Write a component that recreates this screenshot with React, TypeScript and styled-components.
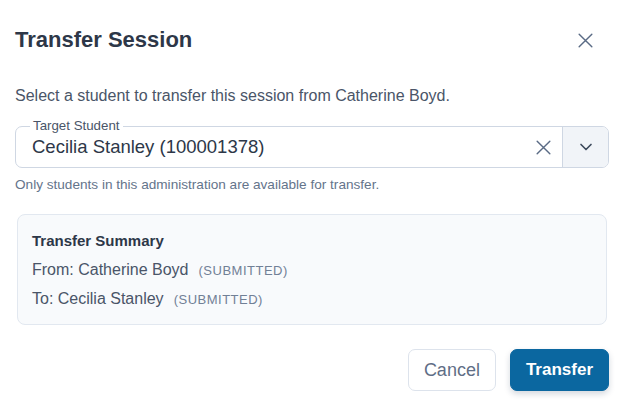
import React from "react";
import styled, { createGlobalStyle } from "styled-components";

const Global = createGlobalStyle`
  html, body { margin: 0; padding: 0; background: #ffffff; }
  body { font-family: "Liberation Sans", Arial, sans-serif; }
  * { box-sizing: border-box; }
`;

const Dialog = styled.div`
  width: 622px;
  height: 406px;
  padding: 0 13px 0 15px;
  display: flex;
  flex-direction: column;
`;

const Header = styled.div`
  height: 80px;
  display: flex;
  align-items: center;
  justify-content: space-between;
`;

const Title = styled.h2`
  margin: 0;
  font-size: 22px;
  line-height: 26px;
  font-weight: 700;
  color: #2d3748;
`;

const CloseButton = styled.button`
  width: 30px;
  height: 30px;
  margin-right: 9px;
  border: none;
  background: transparent;
  padding: 0;
  display: flex;
  align-items: center;
  justify-content: center;
  color: #5a6b85;
  cursor: pointer;
`;

const Description = styled.p`
  margin: 5px 0 0 0;
  height: 22px;
  font-size: 16px;
  line-height: 22px;
  color: #4a5568;
`;

const Field = styled.div`
  margin-top: 19px;
  height: 42px;
  border: 1px solid #cfd7e3;
  border-radius: 7px;
  display: flex;
  align-items: stretch;
  position: relative;
`;

const FloatingLabel = styled.span`
  position: absolute;
  left: 14px;
  top: -9px;
  padding: 0 3px;
  background: #ffffff;
  font-size: 13.3px;
  line-height: 16px;
  color: #4a5568;
`;

const Value = styled.div`
  flex: 1;
  display: flex;
  align-items: center;
  padding-left: 16px;
  font-size: 18.5px;
  color: #2d3748;
`;

const ClearButton = styled.button`
  width: 34px;
  margin-right: 2px;
  border: none;
  background: transparent;
  padding: 0;
  display: flex;
  align-items: center;
  justify-content: center;
  color: #5a6b85;
`;

const Toggle = styled.button`
  width: 46px;
  border: none;
  border-left: 1px solid #cfd7e3;
  background: #f1f4f8;
  border-radius: 0 6px 6px 0;
  padding: 0;
  display: flex;
  align-items: center;
  justify-content: center;
  color: #3d4a5c;
`;

const Helper = styled.div`
  margin-top: 9px;
  font-size: 13.6px;
  line-height: 16px;
  color: #64748b;
`;

const Summary = styled.div`
  margin: 21px 2px 0 2px;
  height: 111px;
  border: 1px solid #e2e8f0;
  border-radius: 8px;
  background: #f8fafc;
  padding: 16px 14px 0 14px;
  display: flex;
  flex-direction: column;
`;

const SummaryTitle = styled.div`
  font-size: 15px;
  font-weight: 700;
  line-height: 20px;
  color: #2d3748;
  margin-bottom: 9px;
`;

const SummaryRow = styled.div`
  font-size: 16px;
  line-height: 20px;
  color: #4a5568;
  margin-bottom: 8px;
  display: flex;
  align-items: baseline;
  gap: 10px;
`;

const Status = styled.span`
  font-size: 13px;
  letter-spacing: 0.5px;
  color: #718096;
`;

const Footer = styled.div`
  margin-top: 24px;
  display: flex;
  justify-content: flex-end;
  gap: 14px;
`;

const Button = styled.button<{ $primary?: boolean }>`
  height: 42px;
  padding: 0 ${(p) => (p.$primary ? "15px" : "15px")};
  border-radius: 7px;
  font-family: "Liberation Sans", Arial, sans-serif;
  font-size: ${(p) => (p.$primary ? "17px" : "18px")};
  font-weight: ${(p) => (p.$primary ? 700 : 400)};
  border: 1px solid ${(p) => (p.$primary ? "#0b67a0" : "#dde3ec")};
  background: ${(p) => (p.$primary ? "#0b67a0" : "#ffffff")};
  color: ${(p) => (p.$primary ? "#ffffff" : "#5f6e86")};
  box-shadow: ${(p) => (p.$primary ? "0 3px 6px rgba(15, 40, 70, 0.18)" : "none")};
  cursor: pointer;
`;

const XIcon = ({ size }: { size: number }) => (
  <svg width={size} height={size} viewBox="0 0 24 24" fill="none" stroke="currentColor" strokeWidth={1.8} strokeLinecap="round">
    <path d="M4 4 L20 20 M20 4 L4 20" />
  </svg>
);

const Chevron = () => (
  <svg width="20" height="20" viewBox="0 0 24 24" fill="none" stroke="currentColor" strokeWidth={2} strokeLinecap="round" strokeLinejoin="round">
    <path d="M6 9 L12 15 L18 9" />
  </svg>
);

export default function App() {
  return (
    <>
      <Global />
      <Dialog>
        <Header>
          <Title>Transfer Session</Title>
          <CloseButton aria-label="Close">
            <XIcon size={19} />
          </CloseButton>
        </Header>
        <Description>Select a student to transfer this session from Catherine Boyd.</Description>
        <Field>
          <FloatingLabel>Target Student</FloatingLabel>
          <Value>Cecilia Stanley (100001378)</Value>
          <ClearButton aria-label="Clear">
            <XIcon size={19} />
          </ClearButton>
          <Toggle aria-label="Open">
            <Chevron />
          </Toggle>
        </Field>
        <Helper>Only students in this administration are available for transfer.</Helper>
        <Summary>
          <SummaryTitle>Transfer Summary</SummaryTitle>
          <SummaryRow>
            <span>From: Catherine Boyd</span>
            <Status>(SUBMITTED)</Status>
          </SummaryRow>
          <SummaryRow>
            <span>To: Cecilia Stanley</span>
            <Status>(SUBMITTED)</Status>
          </SummaryRow>
        </Summary>
        <Footer>
          <Button>Cancel</Button>
          <Button $primary>Transfer</Button>
        </Footer>
      </Dialog>
    </>
  );
}
